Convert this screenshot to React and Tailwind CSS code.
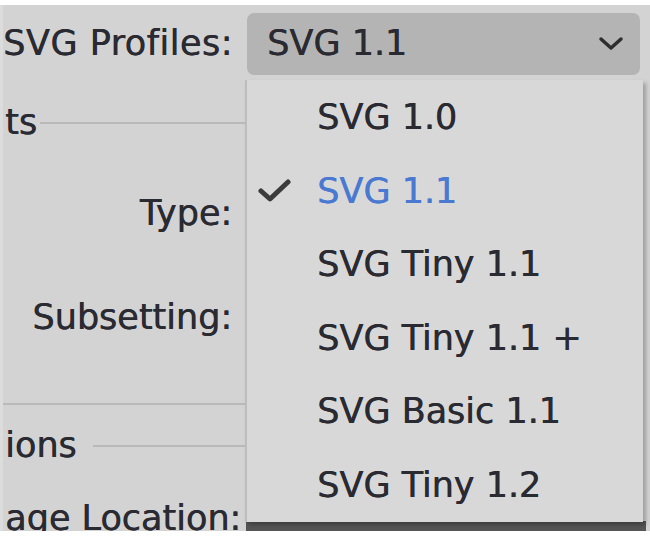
import React from "react";

const font = { fontFamily: '"DejaVu Sans", Verdana, sans-serif' };

function Check() {
  return (
    <svg width="34" height="26" viewBox="0 0 34 26" className="shrink-0">
      <path d="M3 13 L12 21 L30 4" fill="none" stroke="#3b3b3b" strokeWidth="5" strokeLinecap="round" strokeLinejoin="round" />
    </svg>
  );
}

function Chevron() {
  return (
    <svg width="26" height="16" viewBox="0 0 26 16">
      <path d="M3 3 L13 12 L23 3" fill="none" stroke="#2e2e2e" strokeWidth="3.5" strokeLinecap="round" strokeLinejoin="round" />
    </svg>
  );
}

const items = ["SVG 1.0", "SVG 1.1", "SVG Tiny 1.1", "SVG Tiny 1.1 +", "SVG Basic 1.1", "SVG Tiny 1.2"];

export default function App() {
  return (
    <div
      className="relative w-[650px] h-[536px] overflow-hidden bg-white text-[35px] leading-none text-[#2a2a32] [text-shadow:0.5px_0_0_currentColor]"
      style={font}
    >
      <div className="flex flex-col h-[526px] mt-[5px] bg-[#d3d3d3] border-l-[3px] border-[#dcdcdc] overflow-hidden">
        {/* top row */}
        <div className="flex items-center h-[72px] shrink-0 pt-[5px]">
          <div className="w-[229px] text-right tracking-[0.5px] whitespace-nowrap">SVG Profiles:</div>
          <div className="ml-[15px] w-[393px] h-[62px] rounded-[7px] bg-[#b4b4b4] flex items-center justify-between pl-[20px] pr-[16px]">
            <span>SVG 1.1</span>
            <Chevron />
          </div>
        </div>
        {/* left column */}
        <div className="w-[242px] flex flex-col">
          <div className="h-[90px] flex items-center">
            <span className="ml-[2px]">ts</span>
            <div className="flex-1 h-[2px] bg-[#b9b9b9] ml-[3px] mt-[2px]" />
          </div>
          <div className="h-[92px] flex items-center justify-end pr-[13px]">Type:</div>
          <div className="h-[116px] flex items-center justify-end pr-[13px]">Subsetting:</div>
          <div className="h-[2px] bg-[#b9b9b9] mt-[28px]" />
          <div className="h-[80px] flex items-center">
            <span className="ml-[2px]">ions</span>
            <div className="flex-1 h-[2px] bg-[#b9b9b9] ml-[16px] mt-[2px]" />
          </div>
          <div className="h-[66px] flex items-center whitespace-nowrap">
            <span className="ml-[2px]">age Location:</span>
          </div>
        </div>
      </div>

      {/* bottom row under menu */}
      <div className="absolute left-[246px] top-[521px] w-[400px] h-[10px] bg-[#555555]" />

      {/* dropdown menu */}
      <div className="absolute left-[245px] top-[80px] w-[398px] h-[442px] bg-[#d8d8d8] border-l-2 border-[#bdbdbd] shadow-[3px_3px_4px_rgba(0,0,0,0.25)] flex flex-col pt-[1px]">
        {items.map((t, i) => (
          <div key={t} className="h-[74px] flex items-center">
            <div className="w-[70px] flex justify-start pl-[11px]">{i === 1 ? <Check /> : null}</div>
            <span className={i === 1 ? "text-[#4a79d2]" : ""}>{t}</span>
          </div>
        ))}
      </div>
    </div>
  );
}
